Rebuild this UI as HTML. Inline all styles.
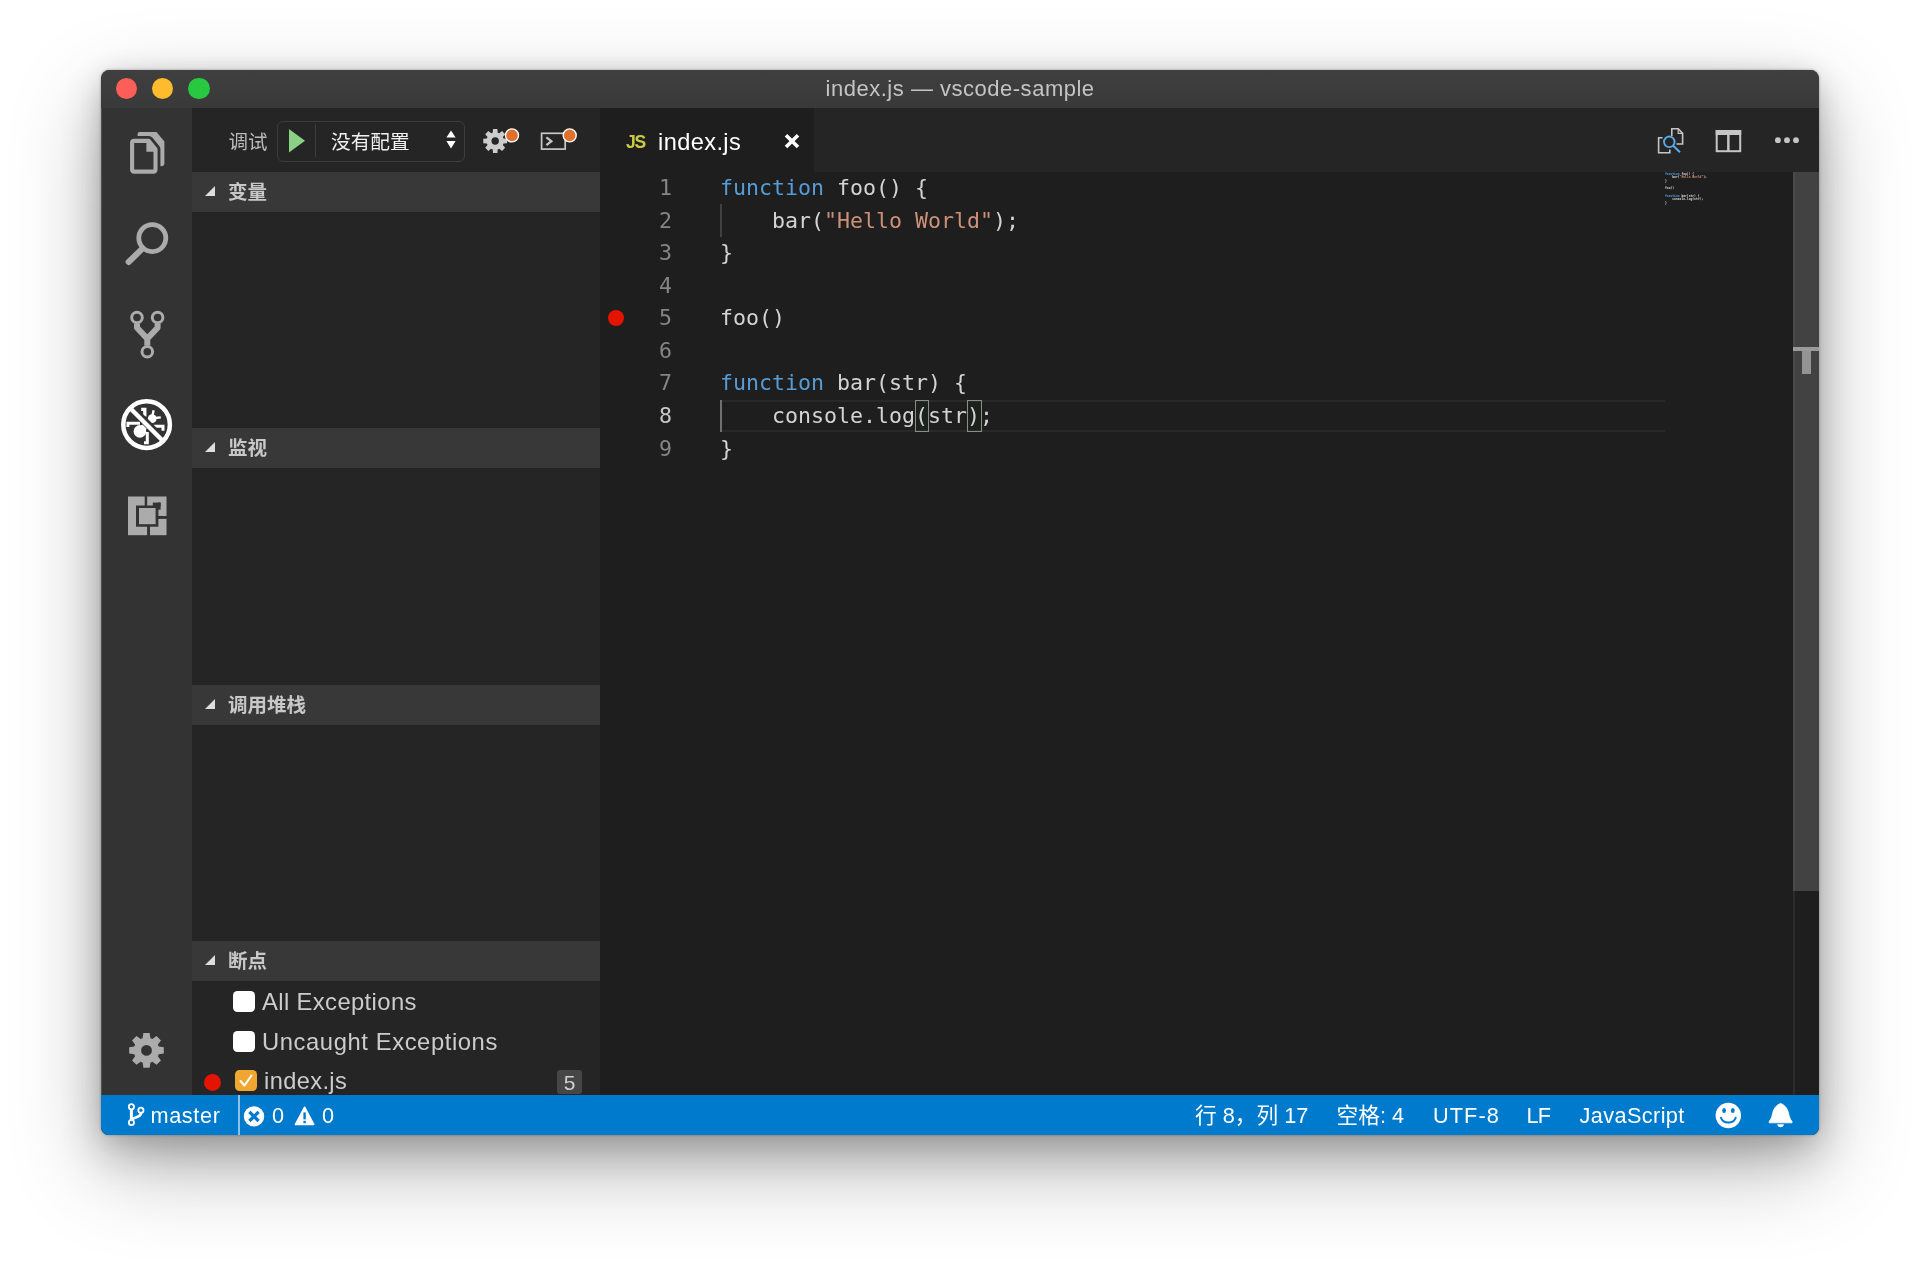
<!DOCTYPE html>
<html lang="zh-CN">
<head>
<meta charset="utf-8">
<title>index.js — vscode-sample</title>
<style>
html,body{margin:0;padding:0;}
body{width:1920px;height:1269px;background:#fff;position:relative;overflow:hidden;
  font-family:"Liberation Sans","Noto Sans CJK SC",sans-serif;color:#ccc;}
#shadow{position:absolute;left:101px;top:69.5px;width:1718px;height:1065.5px;border-radius:8.5px 8.5px 7.5px 7.5px;
  box-shadow:0 32px 90px rgba(0,0,0,.28),0 18px 40px rgba(0,0,0,.2),0 0 3px rgba(0,0,0,.3),0 2px 24px rgba(0,0,0,.08);}
#win{position:absolute;left:101px;top:69.5px;width:1718px;height:1065.5px;border-radius:8.5px 8.5px 7.5px 7.5px;overflow:hidden;background:#1e1e1e;}
/* #pg uses page coordinates */
#pg{will-change:transform;position:absolute;left:-101px;top:-69.5px;width:1920px;height:1269px;}
#pg div,#pg svg,#pg span.a{position:absolute;}
.t{white-space:nowrap;}
#title{left:101px;top:69px;width:1718px;height:39.3px;background:linear-gradient(#3f3f3f,#3c3c3c 60%,#393939);}
.tl{top:77.6px;width:21.5px;height:21.5px;border-radius:50%;}
#act{left:101px;top:108px;width:91px;height:987px;background:#333;}
#side{left:192px;top:108px;width:408px;height:987px;background:#252526;}
.sec{left:192px;width:408px;height:40px;background:#383838;}
.sec .tw{left:13px;top:14px;width:0;height:0;border-left:10.5px solid transparent;border-bottom:10.5px solid #dedede;}
.sec .lb{left:36px;top:0;height:40px;line-height:40px;font-size:19.5px;font-weight:bold;color:#c8c8c8;white-space:nowrap;}
#tabs{left:600px;top:108px;width:1219px;height:64px;background:#252526;}
#tab{left:600px;top:108px;width:214px;height:64px;background:#1e1e1e;}
#ed{left:600px;top:172px;width:1219px;height:923px;background:#1e1e1e;}
.mono{font-family:"DejaVu Sans Mono","Liberation Mono",monospace;font-size:21.6px;}
.ln{left:600px;width:72px;text-align:right;color:#858585;height:33px;line-height:33px;}
.cl{left:720px;white-space:pre;color:#d4d4d4;height:33px;line-height:33px;}
.k{color:#569cd6;} .s{color:#ce9178;}
#status{left:101px;top:1095px;width:1718px;height:40px;background:#007acc;}
.st{top:1095px;height:40px;line-height:41px;white-space:nowrap;color:#fff;font-size:21.7px;}
.row .tx{top:0;height:40px;line-height:40px;font-size:23.4px;color:#ccc;white-space:nowrap;}
.cb{width:22px;height:21px;border-radius:4.5px;background:#fff;}
</style>
</head>
<body>
<div id="shadow"></div>
<div id="win"><div id="pg">
  <!-- title bar -->
  <div id="title"></div>
  <div class="tl" style="left:115.7px;background:#fc5f57;"></div>
  <div class="tl" style="left:151.8px;background:#fdbc2e;"></div>
  <div class="tl" style="left:188px;background:#28c840;"></div>
  <div class="t" id="ttl" style="left:825.6px;top:69.5px;height:38px;line-height:38px;font-size:22px;color:#c4c4c4;letter-spacing:.51px;">index.js — vscode-sample</div>

  <!-- activity bar -->
  <div id="act"></div>
  <div style="left:101px;top:108px;width:1.2px;height:987px;background:#505050;"></div>
  <svg style="left:101px;top:108px;" width="91" height="987" viewBox="101 108 91 987">
<path d="M139.6 132 H156.5 L164.4 141.4 V163 Q164.4 166.2 161.2 166.2 H150 V142 H137.6 V134 Q137.6 132 139.6 132 Z" fill="#ababab"/>
<path d="M134.2 140.9 H148.7 L155.5 149.2 V169.5 Q155.5 171.6 153.4 171.6 H134.2 Q132.1 171.6 132.1 169.5 V143 Q132.1 140.9 134.2 140.9 Z" fill="#333" stroke="#333" stroke-width="9.8" stroke-linejoin="round"/>
<path d="M134.2 140.9 H148.7 L155.5 149.2 V169.5 Q155.5 171.6 153.4 171.6 H134.2 Q132.1 171.6 132.1 169.5 V143 Q132.1 140.9 134.2 140.9 Z" fill="none" stroke="#ababab" stroke-width="4.1" stroke-linejoin="round"/>
<path d="M146.4 140.9 V151.8 H155.5 V149.2 L148.7 140.9 Z" fill="#ababab"/>
<circle cx="152.3" cy="238.1" r="13.5" fill="none" stroke="#ababab" stroke-width="4.8"/><path d="M142.6 248.4 L128.6 262" stroke="#ababab" stroke-width="6" stroke-linecap="round"/>
<g fill="none" stroke="#ababab"><circle cx="137" cy="317.5" r="5.3" stroke-width="3"/><circle cx="157.6" cy="317.5" r="5.3" stroke-width="3"/><circle cx="147.3" cy="351.8" r="5.3" stroke-width="3"/><path d="M137 323.8 V327.8 L147.3 338.6 V345.6 M157.6 323.8 V327.8 L147.3 338.6" stroke-width="6" stroke-linejoin="round"/></g>
<g fill="none" stroke="#fff"><circle cx="139.9" cy="431.4" r="6.3" fill="#fff" stroke="none"/><circle cx="152.2" cy="418.6" r="4.4" fill="#fff" stroke="none"/><path d="M139.9 431.6 L152.2 418.6" stroke-width="6"/><path d="M127.9 427 V423.3 H140" stroke-width="2.9"/><path d="M144 442.7 H147.3 V432" stroke-width="3"/><path d="M141.2 409.3 H144.8 V416.5" stroke-width="3.3"/><path d="M154 426.3 H163 V430.8" stroke-width="3"/><path d="M153.6 410.2 L152.4 416 M155 418 L160.8 417.4" stroke-width="2.4"/><path d="M130.7 407.3 L163.9 440.5" stroke="#333" stroke-width="7.6"/><circle cx="146.6" cy="424.6" r="23.3" stroke-width="4.5"/><path d="M130 408 L163.2 441.2" stroke-width="4.4"/></g>
<rect x="128" y="496.5" width="38.5" height="38.7" fill="#ababab"/><rect x="136" y="505.5" width="22.4" height="21.2" fill="#333"/><rect x="139" y="508" width="16.6" height="16.2" fill="#ababab"/><rect x="144.7" y="496" width="2.5" height="10" fill="#333"/><rect x="147.1" y="526" width="2.9" height="10" fill="#333"/><rect x="158" y="516" width="9" height="2.9" fill="#333"/><rect x="152.8" y="502.6" width="7.8" height="4" fill="#333"/><rect x="157.6" y="502.6" width="3" height="7.1" fill="#333"/>
<path fill-rule="evenodd" fill="#ababab" d="M142.60 1038.21 L143.35 1033.08 L149.65 1033.08 L150.40 1038.21 A12.80 12.80 0 0 1 152.36 1039.02 L156.52 1035.93 L160.97 1040.38 L157.88 1044.54 A12.80 12.80 0 0 1 158.69 1046.50 L163.82 1047.25 L163.82 1053.55 L158.69 1054.30 A12.80 12.80 0 0 1 157.88 1056.26 L160.97 1060.42 L156.52 1064.87 L152.36 1061.78 A12.80 12.80 0 0 1 150.40 1062.59 L149.65 1067.72 L143.35 1067.72 L142.60 1062.59 A12.80 12.80 0 0 1 140.64 1061.78 L136.48 1064.87 L132.03 1060.42 L135.12 1056.26 A12.80 12.80 0 0 1 134.31 1054.30 L129.18 1053.55 L129.18 1047.25 L134.31 1046.50 A12.80 12.80 0 0 1 135.12 1044.54 L132.03 1040.38 L136.48 1035.93 L140.64 1039.02 A12.80 12.80 0 0 1 142.60 1038.21 Z M141.10 1050.40 A5.40 5.40 0 1 0 151.90 1050.40 A5.40 5.40 0 1 0 141.10 1050.40 Z"/>
</svg>

  <!-- sidebar -->
  <div id="side"></div>
  <div class="t" id="dbg" style="left:228.6px;top:121.7px;height:40px;line-height:40px;font-size:19.5px;color:#bbb;">调试</div>
  <div style="left:277px;top:121px;width:186px;height:39px;border:1px solid #3c3c3c;border-radius:6px;"></div>
  <div style="left:315px;top:124px;width:1px;height:33px;background:#3c3c3c;"></div>
  <svg style="left:288px;top:128px;" width="18" height="26" viewBox="0 0 18 26"><path d="M1 1 L17 12.8 L1 24.6 Z" fill="#89d185"/></svg>
  <div class="t" id="cfg" style="left:331px;top:121.7px;height:40px;line-height:40px;font-size:19.7px;color:#f0f0f0;">没有配置</div>
  <svg style="left:445px;top:129px;" width="12" height="21" viewBox="0 0 12 21"><path d="M6 1.5 L10.6 8.5 L1.4 8.5 Z M6 19.5 L10.6 12 L1.4 12 Z" fill="#fff"/></svg>
  <svg style="left:470px;top:118px;" width="130" height="46" viewBox="470 118 130 46">
<path fill-rule="evenodd" fill="#cccccc" d="M492.70 132.67 L493.00 129.10 L497.40 129.10 L497.70 132.67 A8.70 8.70 0 0 1 499.32 133.34 L502.06 131.03 L505.17 134.14 L502.86 136.88 A8.70 8.70 0 0 1 503.53 138.50 L507.10 138.80 L507.10 143.20 L503.53 143.50 A8.70 8.70 0 0 1 502.86 145.12 L505.17 147.86 L502.06 150.97 L499.32 148.66 A8.70 8.70 0 0 1 497.70 149.33 L497.40 152.90 L493.00 152.90 L492.70 149.33 A8.70 8.70 0 0 1 491.08 148.66 L488.34 150.97 L485.23 147.86 L487.54 145.12 A8.70 8.70 0 0 1 486.87 143.50 L483.30 143.20 L483.30 138.80 L486.87 138.50 A8.70 8.70 0 0 1 487.54 136.88 L485.23 134.14 L488.34 131.03 L491.08 133.34 A8.70 8.70 0 0 1 492.70 132.67 Z M491.50 141.00 A3.70 3.70 0 1 0 498.90 141.00 A3.70 3.70 0 1 0 491.50 141.00 Z"/>
<circle cx="512" cy="135.4" r="6.5" fill="#e0712c" stroke="#fff" stroke-width="1.4"/>
<rect x="541.6" y="133.3" width="23.6" height="15.8" fill="none" stroke="#c8c8c8" stroke-width="1.7"/>
<path d="M546.4 137.3 L551.4 141.2 L546.4 145.1" fill="none" stroke="#c8c8c8" stroke-width="2.2"/>
<circle cx="569.7" cy="135.4" r="6.5" fill="#e0712c" stroke="#fff" stroke-width="1.4"/>
</svg>


  <div class="sec" style="top:172px;"><div class="tw"></div><div class="lb">变量</div></div>
  <div class="sec" style="top:428px;"><div class="tw"></div><div class="lb">监视</div></div>
  <div class="sec" style="top:685px;"><div class="tw"></div><div class="lb">调用堆栈</div></div>
  <div class="sec" style="top:941px;"><div class="tw"></div><div class="lb">断点</div></div>

  <!-- breakpoints -->
  <div class="cb" style="left:233px;top:991px;"></div>
  <div class="t" id="bp1" style="left:262px;top:981px;height:40px;line-height:41px;font-size:23.8px;letter-spacing:.38px;color:#ccc;">All Exceptions</div>
  <div class="cb" style="left:233px;top:1031px;"></div>
  <div class="t" id="bp2" style="left:262px;top:1021px;height:40px;line-height:41px;font-size:23.8px;letter-spacing:.58px;color:#ccc;">Uncaught Exceptions</div>
  <div style="left:204px;top:1074px;width:17px;height:17px;border-radius:50%;background:#e51400;"></div>
  <div class="cb" style="left:235px;top:1070px;background:#f0a732;"></div>
  <svg style="left:235px;top:1070px;" width="22" height="21" viewBox="0 0 22 21"><path d="M5.5 11 L9.5 15.5 L16.5 5.5" fill="none" stroke="#fff" stroke-width="2" stroke-linecap="round" stroke-linejoin="round"/></svg>
  <div class="t" id="bp3" style="left:264px;top:1061px;height:40px;line-height:41px;font-size:23.6px;letter-spacing:.4px;color:#ccc;">index.js</div>
  <div style="left:557.2px;top:1070px;width:24.7px;height:24px;border-radius:3px;background:#464646;"></div>
  <div class="t" style="left:557px;top:1070px;width:25px;text-align:center;height:25px;line-height:25.4px;font-size:21px;color:#d0d0d0;">5</div>

  <!-- tabs -->
  <div id="tabs"></div>
  <div id="tab"></div>
  <div class="t" id="jsi" style="left:626px;top:122px;height:40px;line-height:40px;font-size:17.5px;font-weight:bold;color:#cbcb41;letter-spacing:-1.2px;">JS</div>
  <div class="t" id="tbl" style="left:658px;top:122px;height:40px;line-height:40px;font-size:23.6px;color:#fff;letter-spacing:.4px;">index.js</div>
  <svg style="left:783px;top:132px;" width="18" height="18" viewBox="0 0 18 18"><path d="M3 3.2 L15 15 M15 3.2 L3 15" stroke="#fff" stroke-width="3.6" fill="none"/></svg>
  <svg style="left:1650px;top:120px;" width="160" height="44" viewBox="1650 120 160 44">
<g fill="none" stroke="#c5c5c5" stroke-width="1.6">
<path d="M1671.8 136 V128.8 H1678.2 L1682.6 133.4 V144 H1676.5"/>
<path d="M1678.2 128.8 V133.4 H1682.6" stroke-width="1.2"/>
<path d="M1662.5 137.7 H1658.6 V152.8 H1669.8 V149.5"/>
</g>
<circle cx="1669.3" cy="141.8" r="5.3" fill="none" stroke="#5aa9e8" stroke-width="1.9"/>
<path d="M1673.2 145.8 L1680 152.3" stroke="#5aa9e8" stroke-width="2.1"/>
<rect x="1716.7" y="131" width="23.5" height="20.2" fill="none" stroke="#c5c5c5" stroke-width="2"/>
<rect x="1715.7" y="130" width="25.5" height="5" fill="#c5c5c5"/>
<rect x="1727.1" y="131" width="2.5" height="20" fill="#c5c5c5"/>
<circle cx="1777.9" cy="140.2" r="2.9" fill="#c5c5c5"/><circle cx="1787" cy="140.2" r="2.9" fill="#c5c5c5"/><circle cx="1796" cy="140.2" r="2.9" fill="#c5c5c5"/>
</svg>


  <!-- editor -->
  <div id="ed"></div>
  <div style="left:720px;top:400px;width:945px;height:28px;border-top:2px solid #282828;border-bottom:2px solid #282828;"></div>
<div style="left:720px;top:204px;width:1.5px;height:33px;background:#404040;"></div>
<div style="left:719.5px;top:400px;width:2.2px;height:32px;background:#707070;"></div>
<div style="left:915px;top:400px;width:11.8px;height:30px;border:1px solid #8c8c8c;background:rgba(0,100,0,.07);"></div>
<div style="left:967.4px;top:400px;width:12.2px;height:30px;border:1px solid #8c8c8c;background:rgba(0,100,0,.07);"></div>
<div class="mono ln" style="top:171.03px;color:#858585;">1</div>
<div class="mono cl" style="top:171.03px;"><span class="k">function</span> foo() {</div>
<div class="mono ln" style="top:203.60px;color:#858585;">2</div>
<div class="mono cl" style="top:203.60px;">    bar(<span class="s">"Hello World"</span>);</div>
<div class="mono ln" style="top:236.17px;color:#858585;">3</div>
<div class="mono cl" style="top:236.17px;">}</div>
<div class="mono ln" style="top:268.74px;color:#858585;">4</div>
<div class="mono ln" style="top:301.31px;color:#858585;">5</div>
<div class="mono cl" style="top:301.31px;">foo()</div>
<div class="mono ln" style="top:333.88px;color:#858585;">6</div>
<div class="mono ln" style="top:366.45px;color:#858585;">7</div>
<div class="mono cl" style="top:366.45px;"><span class="k">function</span> bar(str) {</div>
<div class="mono ln" style="top:399.02px;color:#c6c6c6;">8</div>
<div class="mono cl" style="top:399.02px;">    console.log(str);</div>
<div class="mono ln" style="top:431.59px;color:#858585;">9</div>
<div class="mono cl" style="top:431.59px;">}</div>
<div style="left:608.3px;top:310px;width:16px;height:16px;border-radius:50%;background:#e51400;"></div>
<div id="mini" style="left:1664.7px;top:172px;width:900px;height:240px;transform:scale(.14);transform-origin:0 0;opacity:1;font-weight:bold;"><div class="mono" style="left:0;top:0px;height:26px;line-height:26px;white-space:pre;color:#d4d4d4;"><span class="k">function</span> foo() {</div><div class="mono" style="left:0;top:26px;height:26px;line-height:26px;white-space:pre;color:#d4d4d4;">    bar(<span class="s">"Hello World"</span>);</div><div class="mono" style="left:0;top:52px;height:26px;line-height:26px;white-space:pre;color:#d4d4d4;">}</div><div class="mono" style="left:0;top:104px;height:26px;line-height:26px;white-space:pre;color:#d4d4d4;">foo()</div><div class="mono" style="left:0;top:156px;height:26px;line-height:26px;white-space:pre;color:#d4d4d4;"><span class="k">function</span> bar(str) {</div><div class="mono" style="left:0;top:182px;height:26px;line-height:26px;white-space:pre;color:#d4d4d4;">    console.log(str);</div><div class="mono" style="left:0;top:208px;height:26px;line-height:26px;white-space:pre;color:#d4d4d4;">}</div></div>
<div style="left:1793px;top:172px;width:26px;height:923px;border-left:2px solid #2b2b2b;box-sizing:border-box;"></div>
<div style="left:1793px;top:172px;width:26px;height:718.5px;background:#424242;border-left:2px solid #494949;box-sizing:border-box;"></div>
<div style="left:1793px;top:347px;width:26px;height:4px;background:#9a9a9a;"></div>
<div style="left:1802px;top:351px;width:9px;height:23px;background:#949494;"></div>

  <!-- status bar -->
  <div id="status"></div>
  <div style="left:238.4px;top:1095px;width:1.3px;height:40px;background:rgba(255,255,255,.55);"></div>
<svg style="left:120px;top:1100px;" width="30" height="30" viewBox="120 1100 30 30">
<g fill="none" stroke="#fff" stroke-width="1.8">
<circle cx="131.4" cy="1106.8" r="2.6"/><circle cx="140.9" cy="1110.2" r="2.6"/><circle cx="131.4" cy="1122.5" r="2.6"/>
<path d="M131.4 1109.6 V1119.8" stroke-width="3"/><path d="M140.9 1113 C140.9 1118.4 133.4 1116 131.8 1120.4" stroke-width="2.8"/>
</g></svg>
<div class="t st" id="s_master" style="left:150.5px;letter-spacing:.62px;">master</div>
<svg style="left:240px;top:1100px;" width="80" height="30" viewBox="240 1100 80 30">
<circle cx="254" cy="1116.4" r="10.2" fill="#fff"/>
<path d="M249.4 1111.8 L258.6 1121 M258.6 1111.8 L249.4 1121" stroke="#007acc" stroke-width="3.2" fill="none"/>
<path d="M304.6 1107.4 L313.6 1124.4 H295.6 Z" fill="#fff" stroke="#fff" stroke-width="1.8" stroke-linejoin="round"/>
<path d="M304.6 1112.4 V1119.4" stroke="#007acc" stroke-width="2.4"/><rect x="303.4" y="1120.8" width="2.4" height="2.4" fill="#007acc"/>
</svg>
<div class="t st" id="s_e0" style="left:272px;">0</div>
<div class="t st" id="s_w0" style="left:322px;">0</div>
<div class="t st" id="s_pos" style="left:1195px;">行 8，列 17</div>
<div class="t st" id="s_sp" style="left:1336.5px;">空格: 4</div>
<div class="t st" id="s_enc" style="left:1433px;letter-spacing:1.1px;">UTF-8</div>
<div class="t st" id="s_eol" style="left:1526.5px;letter-spacing:-.8px;">LF</div>
<div class="t st" id="s_lang" style="left:1579.5px;letter-spacing:.4px;">JavaScript</div>
<svg style="left:1710px;top:1098px;" width="90" height="34" viewBox="1710 1098 90 34">
<circle cx="1728.3" cy="1115.5" r="12.7" fill="#fff"/>
<ellipse cx="1724.1" cy="1110.5" rx="1.9" ry="2.5" fill="#007acc"/><ellipse cx="1732.8" cy="1110.5" rx="1.9" ry="2.5" fill="#007acc"/>
<path d="M1721 1117.8 C1723 1124.2 1733.7 1124.2 1735.7 1117.8" fill="none" stroke="#007acc" stroke-width="2" stroke-linecap="round"/>
<path d="M1780.6 1103.4 C1784.6 1104.8 1787.6 1108.4 1788.5 1112.8 C1789.2 1116.8 1790.3 1119.6 1792 1121.4 V1122.8 H1769.2 V1121.4 C1770.9 1119.6 1772 1116.8 1772.7 1112.8 C1773.6 1108.4 1776.6 1104.8 1780.6 1103.4 Z" fill="#fff" stroke="#fff" stroke-width=".8" stroke-linejoin="round"/>
<path d="M1777.3 1124.3 H1783.9 C1783.9 1128.2 1777.3 1128.2 1777.3 1124.3 Z" fill="#fff"/>
</svg>

</div></div>
</body>
</html>
